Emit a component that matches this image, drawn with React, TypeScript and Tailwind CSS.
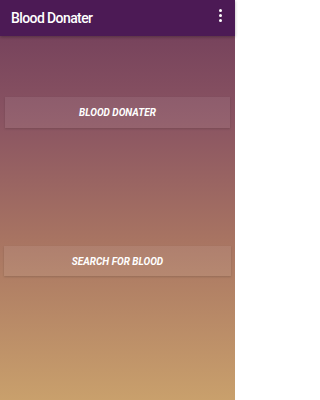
export default function App() {
  return (
    <div className="w-[235px] h-[400px] flex flex-col font-['Roboto',sans-serif] bg-[linear-gradient(to_bottom,#6f3c5a_0%,#8a5462_30%,#a87462_60%,#c9a06c_100%)]">
      {/* Toolbar */}
      <div className="h-[36px] shrink-0 bg-[#4c1a55] flex items-center justify-between pl-[11px] pr-[7px] shadow-[0_1px_3px_rgba(0,0,0,0.3)]">
        <h1 className="text-white text-[14px] font-medium tracking-[-0.6px] leading-none">Blood Donater</h1>
        <button className="w-[16px] h-[24px] mb-[5px] flex flex-col items-center justify-center gap-[2px]">
          <span className="w-[3px] h-[3px] rounded-full bg-white" />
          <span className="w-[3px] h-[3px] rounded-full bg-white" />
          <span className="w-[3px] h-[3px] rounded-full bg-white" />
        </button>
      </div>

      <div className="flex flex-col px-[4px] pt-[61px]">
        <button className="h-[31px] mx-[1px] bg-[#ffffff14] shadow-[0_1px_2px_rgba(0,0,0,0.15)] text-white text-[10px] font-bold italic uppercase">
          Blood Donater
        </button>
        <button className="h-[30px] mt-[118px] bg-[#ffffff14] shadow-[0_1px_2px_rgba(0,0,0,0.15)] text-white text-[10px] font-bold italic uppercase">
          Search for Blood
        </button>
      </div>
    </div>
  );
}
